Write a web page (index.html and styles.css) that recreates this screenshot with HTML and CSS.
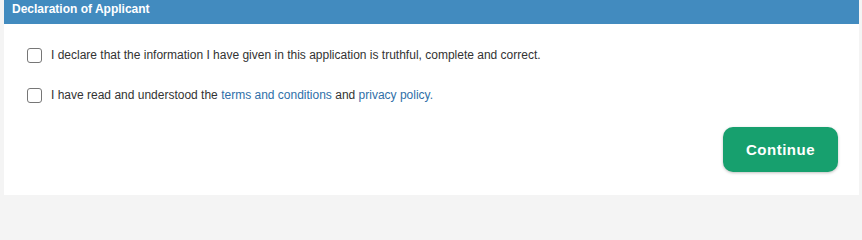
FILE: index.html
```html
<!DOCTYPE html>
<html lang="en">
<head>
<meta charset="utf-8">
<title>Declaration of Applicant</title>
<link rel="stylesheet" href="styles.css">
</head>
<body>
<div class="page">
  <section class="card">
    <header class="card-header">Declaration of Applicant</header>
    <div class="card-body">
      <label class="check-row">
        <span class="box"></span>
        <span class="label-text">I declare that the information I have given in this application is truthful, complete and correct.</span>
      </label>
      <label class="check-row">
        <span class="box"></span>
        <span class="label-text">I have read and understood the <a class="link" href="#">terms and conditions</a> and <a class="link" href="#">privacy policy.</a></span>
      </label>
      <div class="actions">
        <button class="btn-continue" type="button">Continue</button>
      </div>
    </div>
  </section>
</div>
</body>
</html>
```

FILE: styles.css
```css
html, body {
  margin: 0;
  padding: 0;
  background: #f4f4f4;
  font-family: "Liberation Sans", Arial, sans-serif;
}
html {
  height: 202px;
  overflow: hidden;
}
.page {
  padding: 0 3px 0 4px;
  height: 202px;
  box-sizing: border-box;
}
.card {
  background: #ffffff;
  height: 195px;
  display: flex;
  flex-direction: column;
}
.card-header {
  background: #428bbf;
  color: #ffffff;
  font-weight: bold;
  font-size: 12px;
  height: 24px;
  line-height: 18px;
  padding: 0 8px;
  box-sizing: border-box;
}
.card-body {
  padding: 23px 21px 0 23px;
  display: flex;
  flex-direction: column;
}
.check-row {
  display: flex;
  align-items: center;
  gap: 9px;
  height: 16px;
  margin-bottom: 24px;
  font-size: 12px;
  color: #333333;
}
.box {
  width: 13px;
  height: 13px;
  border: 1px solid #767676;
  border-radius: 3px;
  background: #fff;
  flex: none;
}
.label-text {
  line-height: 16px;
}
.link {
  color: #2f6fa8;
  text-decoration: none;
}
.actions {
  display: flex;
  justify-content: flex-end;
}
.btn-continue {
  width: 115px;
  height: 45px;
  border: none;
  border-radius: 10px;
  background: #17a06e;
  color: #ffffff;
  font-family: "Liberation Sans", Arial, sans-serif;
  font-weight: bold;
  font-size: 15px;
  letter-spacing: 0.5px;
  box-shadow: 0 1px 3px rgba(0, 0, 0, 0.25);
  cursor: pointer;
}
```
